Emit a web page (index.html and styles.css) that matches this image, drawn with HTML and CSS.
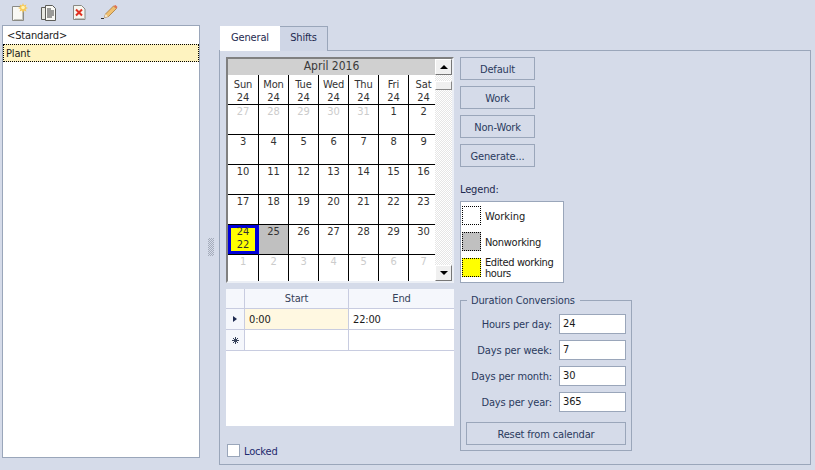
FILE: index.html
```html
<!DOCTYPE html>
<html lang="en">
<head>
<meta charset="utf-8">
<title>Calendars</title>
<link rel="stylesheet" href="styles.css">
</head>
<body>
<div class="app">
  <div class="toolbar">
    <svg class="tool tool-new" width="16" height="18" viewBox="0 0 16 18">
      <path d="M.5 3.500h8l3 3v11H.5z" fill="#f8f8f4" stroke="#8a8a84"/>
      <path d="M2 16.500h9M10.500 8v8" stroke="#c4c4bc"/>
      <path d="M11 0l1 2.500 2.500-1-1 2.500 2.500 1-2.500 1 1 2.500-2.500-1-1 2.500-1-2.500-2.500 1 1-2.500-2.500-1 2.500-1-1-2.500 2.500 1z" fill="#f8c850"/>
      <circle cx="11" cy="4.500" r="1.800" fill="#fff2b0"/>
    </svg>
    <svg class="tool tool-copy" width="16" height="16" viewBox="0 0 16 16">
      <path d="M.5 2.500h9v12h-9z" fill="#e8e8e2" stroke="#5c5c58"/>
      <path d="M4.500.5h7l3 3v12h-10z" fill="#f8f8f4" stroke="#5c5c58"/>
      <path d="M6 4h4M6 6h7M6 8h7M6 10h7M6 12h5" stroke="#3c3c3c"/>
    </svg>
    <svg class="tool tool-del" width="13" height="15" viewBox="0 0 13 15">
      <path d="M.5.5h8l3.500 3.500v10.500H.5z" fill="#f6f6f0" stroke="#8a8a84"/>
      <path d="M2 13.500h9" stroke="#c4c4bc"/>
      <path d="M3 4.500l6 6M9 4.500l-6 6" stroke="#e03020" stroke-width="2"/>
    </svg>
    <svg class="tool tool-pen" width="17" height="14" viewBox="0 0 17 14">
      <path d="M0 13.500h3" stroke="#303030"/>
      <path d="M3.500 12.500l1-3.500 8-8 3 2.500-8 8z" fill="#f0c070" stroke="#a87838" stroke-width=".8"/>
      <path d="M12.500 1l3 2.500 1-1.500-2-2z" fill="#e07050"/>
      <path d="M3.500 12.500l1-3.500 2.500 2.500z" fill="#f4e8d0"/>
    </svg>
  </div>
  <div class="main">
    <div class="list">
      <div class="list-item">&lt;Standard&gt;</div>
      <div class="list-item list-item-active">Plant</div>
    </div>
    <div class="splitter"><div class="grip"></div></div>
    <div class="tabs">
      <div class="tabstrip">
        <div class="tab tab-active">General</div>
        <div class="tab">Shifts</div>
      </div>
      <div class="panel">
        <div class="col-left">
          <div class="calendar">
            <div class="cal-main">
              <div class="cal-title">April 2016</div>
              <div class="cal-grid">
                <div class="cal-head">Sun<br>24</div><div class="cal-head">Mon<br>24</div><div class="cal-head">Tue<br>24</div><div class="cal-head">Wed<br>24</div><div class="cal-head">Thu<br>24</div><div class="cal-head">Fri<br>24</div><div class="cal-head">Sat<br>24</div>
                <div class="day out">27</div><div class="day out">28</div><div class="day out">29</div><div class="day out">30</div><div class="day out">31</div><div class="day">1</div><div class="day">2</div>
                <div class="day">3</div><div class="day">4</div><div class="day">5</div><div class="day">6</div><div class="day">7</div><div class="day">8</div><div class="day">9</div>
                <div class="day">10</div><div class="day">11</div><div class="day">12</div><div class="day">13</div><div class="day">14</div><div class="day">15</div><div class="day">16</div>
                <div class="day">17</div><div class="day">18</div><div class="day">19</div><div class="day">20</div><div class="day">21</div><div class="day">22</div><div class="day">23</div>
                <div class="day edited">24<br>22</div><div class="day off">25</div><div class="day">26</div><div class="day">27</div><div class="day">28</div><div class="day">29</div><div class="day">30</div>
                <div class="day out last">1</div><div class="day out last">2</div><div class="day out last">3</div><div class="day out last">4</div><div class="day out last">5</div><div class="day out last">6</div><div class="day out last">7</div>
              </div>
            </div>
            <div class="scrollbar">
              <div class="sb-btn"><span class="arrow-up"></span></div>
              <div class="sb-track"><div class="sb-thumb"></div></div>
              <div class="sb-btn"><span class="arrow-down"></span></div>
            </div>
          </div>
          <div class="shifts">
            <div class="sh-row sh-head">
              <div class="sh-ind"></div>
              <div class="sh-cell sh-start">Start</div>
              <div class="sh-cell sh-end">End</div>
            </div>
            <div class="sh-row">
              <div class="sh-ind"><span class="arrow-right"></span></div>
              <div class="sh-cell sh-start sh-current">0:00</div>
              <div class="sh-cell sh-end">22:00</div>
            </div>
            <div class="sh-row">
              <div class="sh-ind">
                <svg width="7" height="7" viewBox="0 0 7 7"><path d="M3.500 0v7M0 3.500h7M1 1l5 5M6 1l-5 5" stroke="#36425a"/></svg>
              </div>
              <div class="sh-cell sh-start"></div>
              <div class="sh-cell sh-end"></div>
            </div>
          </div>
          <label class="locked"><span class="check"></span>Locked</label>
        </div>
        <div class="col-right">
          <div class="btn">Default</div>
          <div class="btn">Work</div>
          <div class="btn">Non-Work</div>
          <div class="btn">Generate...</div>
          <div class="legend-label">Legend:</div>
          <div class="legend">
            <div class="legend-row"><span class="swatch"></span><span class="legend-text">Working</span></div>
            <div class="legend-row"><span class="swatch swatch-off"></span><span class="legend-text legend-tight">Nonworking</span></div>
            <div class="legend-row"><span class="swatch swatch-edit"></span><span class="legend-wrap">Edited working hours</span></div>
          </div>
          <fieldset class="group">
            <legend class="group-title">Duration Conversions</legend>
            <div class="field"><span class="field-label">Hours per day:</span><span class="input">24</span></div>
            <div class="field"><span class="field-label">Days per week:</span><span class="input">7</span></div>
            <div class="field"><span class="field-label">Days per month:</span><span class="input">30</span></div>
            <div class="field"><span class="field-label">Days per year:</span><span class="input">365</span></div>
            <div class="btn btn-wide">Reset from calendar</div>
          </fieldset>
        </div>
      </div>
    </div>
  </div>
</div>
</body>
</html>
```
FILE: styles.css
```css
* { box-sizing: border-box; }
html, body { margin: 0; padding: 0; }
body {
  width: 815px;
  height: 470px;
  overflow: hidden;
  background: #d5dbe9;
  font-family: "DejaVu Sans Condensed", "DejaVu Sans", sans-serif;
  font-size: 11px;
  line-height: 13px;
  letter-spacing: -.15px;
  color: #1e2a50;
}
.app { display: flex; flex-direction: column; height: 470px; }
.toolbar { height: 25px; display: flex; align-items: flex-start; flex: none; }
.tool { display: block; flex: none; }
.tool-new { margin: 3px 0 0 12px; }
.tool-copy { margin: 5px 0 0 13px; }
.tool-del { margin: 5px 0 0 16px; }
.tool-pen { margin: 5px 0 0 15px; }

.main { display: flex; flex: none; height: 445px; padding-left: 2px; }
.list {
  width: 198px; height: 433px; flex: none;
  background: #fff; border: 1px solid #9aa6ba;
  color: #1a1a1a;
}
.list-item { height: 18px; line-height: 19px; padding-left: 4px; }
.list-item-active { background: #fef3c0; border: 1px dotted #000; padding-left: 2px; line-height: 17px; }
.splitter { width: 19px; flex: none; padding: 213px 0 0 8px; }
.grip {
  width: 6px; height: 18px;
  background: repeating-conic-gradient(#a4abba 0 25%, #d5dbe9 0 50%) 0 0 / 2px 2px;
}

.tabs { width: 592px; flex: none; display: flex; flex-direction: column; }
.tabstrip { display: flex; height: 25px; flex: none; padding: 1px 0 0 1px; position: relative; z-index: 1; }
.tab {
  width: 48px; height: 25px; line-height: 21px; text-align: center;
  border: 1px solid #9aa6ba; border-left-width: 0;
  border-bottom-width: 0; background: #cfd6e6;
}
.tab-active { width: 60px; height: 25px; background: #fff; border-color: #fff; border-left-width: 1px; }
.panel {
  flex: none; height: 415px; display: flex; gap: 6px;
  border: 1px solid #9aa6ba; padding: 6px 0 0 6px;
}
.col-left { width: 228px; flex: none; display: flex; flex-direction: column; }
.col-right { width: 172px; flex: none; display: flex; flex-direction: column; }

.calendar {
  height: 226px; flex: none; display: flex; overflow: hidden;
  background: #fff;
  border: 2px solid;
  border-color: #808080 #eceff5 #eceff5 #808080;
  color: #333;
}
.cal-main { width: 207px; flex: none; }
.cal-title { height: 16px; line-height: 15px; background: #d0d0d0; text-align: center; font-size: 12px; color: #3a3a3a; letter-spacing: 0; }
.cal-grid { display: grid; grid-template-columns: 31px repeat(5, 30px) 26px; grid-template-rows: 30px repeat(5, 30px) 27px; }
.cal-head, .day { border-right: 1px solid #000; border-bottom: 1px solid #000; text-align: center; }
.cal-head { padding-top: 3px; }
.cal-head:nth-child(7n), .day:nth-child(7n) { border-right: 0; padding-left: 3px; white-space: nowrap; }
.day.out { color: #ccc; }
.day.last { border-bottom: 0; }
.day.off { background: #c0c0c0; }
.day.edited { background: #ff0; box-shadow: inset 0 0 0 3px #0000d8; border-right-color: #0000d8; }

.scrollbar { width: 17px; flex: none; display: flex; flex-direction: column; }
.sb-btn {
  height: 16px; flex: none; display: flex; align-items: center; justify-content: center;
  background: #f0f0f0; border: 1px solid; border-color: #fff #777 #777 #fff;
}
.sb-track {
  flex: 1; padding-top: 6px;
  background: repeating-conic-gradient(#e6e6e6 0 25%, #fff 0 50%) 0 0 / 2px 2px;
}
.sb-thumb { height: 9px; background: #f0f0f0; border: 1px solid; border-color: #fff #888 #888 #fff; }
.arrow-up { border: 4px solid transparent; border-top: 0; border-bottom: 4px solid #000; }
.arrow-down { border: 4px solid transparent; border-bottom: 0; border-top: 4px solid #000; }

.shifts { height: 137px; flex: none; margin-top: 6px; background: #fff; color: #1a1a1a; }
.sh-row { display: flex; height: 21px; }
.sh-row.sh-head { height: 20px; color: #36425a; background: #f5f7fc; }
.sh-ind {
  width: 19px; flex: none; display: flex; align-items: center; justify-content: center;
  background: #f5f7fc; border-right: 1px solid #c8cce0; border-bottom: 1px solid #c8cce0;
}
.sh-cell { height: 100%; line-height: 21px; padding-left: 4px; border-bottom: 1px solid #c8cce0; }
.sh-start { width: 104px; flex: none; border-right: 1px solid #c8cce0; }
.sh-end { flex: 1; }
.sh-head .sh-cell { text-align: center; padding-left: 0; line-height: 19px; }
.sh-current { background: #fff8e1; }
.arrow-right { border: 3.500px solid transparent; border-right: 0; border-left: 4px solid #1e2a50; }

.locked { display: flex; align-items: flex-start; margin-top: 18px; padding-left: 1px; height: 13px; line-height: 15px; color: #1e2a6e; }
.check { width: 13px; height: 13px; background: #fff; border: 1px solid #9aa6ba; margin-right: 4px; }

.btn {
  width: 75px; height: 23px; flex: none; line-height: 23px; text-align: center;
  border: 1px solid #9aa6ba; background: #d5dbe9; color: #2a3a5e; margin-bottom: 6px;
}
.legend-label { margin-top: 10px; height: 18px; color: #1e2a50; }
.legend {
  width: 104px; height: 82px; flex: none; background: #fff; border: 1px solid #9aa6ba;
  color: #1a1a1a; padding: 4px 0 0 1px; line-height: 11px;
}
.legend-row { display: flex; align-items: center; height: 19px; margin-bottom: 7px; gap: 4px; }
.legend-text { padding-top: 1px; letter-spacing: 0; }
.legend-tight { letter-spacing: -.3px; }
.legend-wrap { width: 78px; letter-spacing: -.4px; }
.swatch { width: 19px; height: 19px; flex: none; border: 1px dotted #000; background: #fff; }
.swatch-off { background: #c0c0c0; }
.swatch-edit { background: #ff0; }

.group {
  margin: 11px 0 0; width: 172px; height: 157px;
  border: 1px solid #9aa6ba; padding: 7px 5px 0;
}
.group-title { margin-left: 1px; padding: 0 5px 0 4px; color: #2a3a5e; }
.field { display: flex; align-items: center; justify-content: flex-end; height: 20px; margin-bottom: 6px; gap: 7px; color: #2a3a5e; }
.input { width: 67px; height: 20px; line-height: 18px; padding-left: 3px; background: #fff; border: 1px solid #9aa6ba; color: #1a1a1a; }
.btn-wide { width: 160px; margin: 10px 0 0; }
```
